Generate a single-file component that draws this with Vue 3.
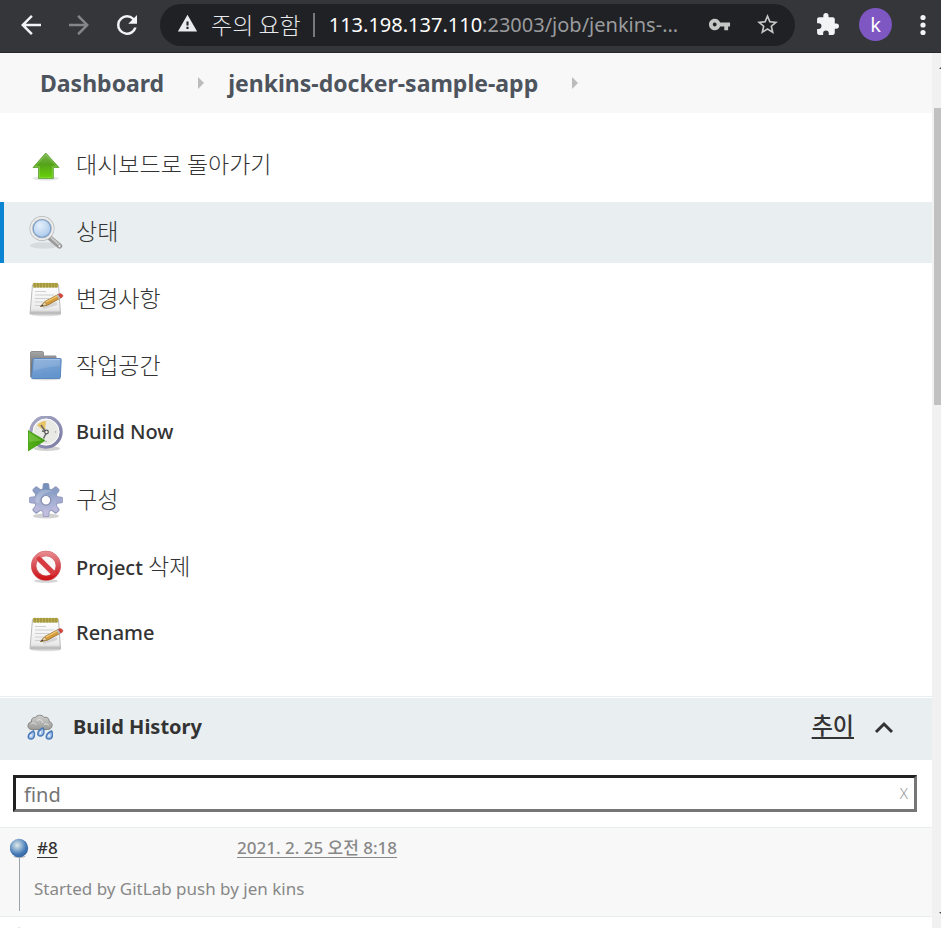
<script setup>
/**
 * Jenkins job page in a narrow browser window:
 * toolbar, breadcrumbs, task list and build history.
 */
import { ref } from 'vue'

// Korean runs are set lighter and larger than latin ones
const tasks = [
  { icon: 'up', parts: [{ text: '대시보드로 돌아가기', ko: true }] },
  { icon: 'search', parts: [{ text: '상태', ko: true }], active: true },
  { icon: 'notepad', parts: [{ text: '변경사항', ko: true }] },
  { icon: 'folder', parts: [{ text: '작업공간', ko: true }] },
  { icon: 'clock', parts: [{ text: 'Build Now' }] },
  { icon: 'gear', parts: [{ text: '구성', ko: true }] },
  { icon: 'stop', parts: [{ text: 'Project ' }, { text: '삭제', ko: true }] },
  { icon: 'notepad', parts: [{ text: 'Rename' }] },
]

const crumbs = ['Dashboard', 'jenkins-docker-sample-app']

const builds = [
  { id: 8, date: '2021. 2. 25 오전 8:18', cause: 'Started by GitLab push by jen kins' },
]

const query = ref('')

// Eight teeth, one every 45 degrees
const teeth = [0, 45, 90, 135, 180, 225, 270, 315]
</script>

<template>
  <div class="window">
    <header class="toolbar">
      <button class="tool" aria-label="Back">
        <svg width="30" height="30" viewBox="0 0 24 24"><path d="M20 11H7.83l5.59-5.59L12 4l-8 8 8 8 1.41-1.41L7.83 13H20v-2z" /></svg>
      </button>
      <button class="tool off" aria-label="Forward">
        <svg width="30" height="30" viewBox="0 0 24 24"><path d="M4 11h12.17l-5.59-5.59L12 4l8 8-8 8-1.41-1.41L16.17 13H4v-2z" /></svg>
      </button>
      <button class="tool" aria-label="Reload">
        <svg width="30" height="30" viewBox="0 0 24 24"><path d="M17.65 6.35A7.96 7.96 0 0 0 12 4a8 8 0 1 0 7.73 10h-2.08A6 6 0 1 1 12 6c1.66 0 3.14.69 4.22 1.78L13 11h7V4l-2.35 2.35z" /></svg>
      </button>

      <div class="omnibox">
        <button class="site-info">
          <svg width="21" height="21" viewBox="0 0 24 24"><path d="M1 21h22L12 2 1 21zm12.2-2.8h-2.4v-2.4h2.4v2.4zm0-4h-2.4V9.6h2.4v4.6z" /></svg>
          <span>주의 요함</span>
        </button>
        <span class="divider"></span>
        <div class="url"><b>113.198.137.110</b>:23003/job/jenkins-...</div>
        <button class="tool dim" aria-label="Passwords">
          <svg width="23" height="23" viewBox="0 0 24 24"><path d="M12.65 10C11.83 7.67 9.61 6 7 6c-3.31 0-6 2.69-6 6s2.69 6 6 6c2.61 0 4.83-1.67 5.65-4H17v4h4v-4h2v-4H12.65zM7 14c-1.1 0-2-.9-2-2s.9-2 2-2 2 .9 2 2-.9 2-2 2z" /></svg>
        </button>
        <button class="tool dim" aria-label="Bookmark">
          <svg width="25" height="25" viewBox="0 0 24 24"><path d="M22 9.24l-7.19-.62L12 2 9.19 8.63 2 9.24l5.46 4.73L5.82 21 12 17.27 18.18 21l-1.63-7.03L22 9.24zM12 15.4l-3.76 2.27 1-4.28-3.32-2.88 4.38-.38L12 6.1l1.71 4.04 4.38.38-3.32 2.88 1 4.28L12 15.4z" /></svg>
        </button>
      </div>

      <div class="actions">
        <button class="tool" aria-label="Extensions">
          <svg width="25" height="25" viewBox="0 0 24 24"><path d="M20.5 11H19V7c0-1.1-.9-2-2-2h-4V3.5a2.5 2.5 0 0 0-5 0V5H4c-1.1 0-2 .9-2 2v3.8h1.5a2.7 2.7 0 0 1 0 5.4H2V20c0 1.1.9 2 2 2h3.8v-1.5a2.7 2.7 0 0 1 5.4 0V22H17c1.1 0 2-.9 2-2v-4h1.5a2.5 2.5 0 0 0 0-5z" /></svg>
        </button>
        <button class="avatar">k</button>
        <button class="tool" aria-label="Menu">
          <svg width="24" height="24" viewBox="0 0 24 24">
            <circle cx="12" cy="4.5" r="2.6" />
            <circle cx="12" cy="12" r="2.6" />
            <circle cx="12" cy="19.5" r="2.6" />
          </svg>
        </button>
      </div>
    </header>

    <div class="viewport">
      <main class="page">
        <nav class="crumbs">
          <template v-for="c in crumbs" :key="c">
            <a href="#">{{ c }}</a>
            <svg width="6" height="12" viewBox="0 0 6 12"><path d="M0 0l6 6-6 6z" fill="#bcbcbc" /></svg>
          </template>
        </nav>

        <nav class="tasks">
          <a v-for="(t, i) in tasks" :key="i" href="#" class="task" :class="{ active: t.active }">
            <!-- green arrow -->
            <svg v-if="t.icon === 'up'" class="icon" viewBox="0 0 36 36">
              <defs>
                <linearGradient id="up-fill" x1="0" y1="0" x2="0" y2="1">
                  <stop offset="0" stop-color="#7fb557" />
                  <stop offset=".45" stop-color="#55a31a" />
                  <stop offset="1" stop-color="#68d406" />
                </linearGradient>
              </defs>
              <ellipse cx="18" cy="30.500" rx="13" ry="2.200" fill="#000" opacity=".1" />
              <path d="M17.800 5L31 19.500h-5.700v11h-14.800v-11H5z" fill="url(#up-fill)" stroke="#6cab45" stroke-width="1" stroke-linejoin="round" />
              <path d="M17.800 6.600L28.600 18.500h-4.300v11h-12.800v-11H7.300z" fill="none" stroke="#a6e070" stroke-width=".8" opacity=".5" />
            </svg>

            <!-- magnifier -->
            <svg v-else-if="t.icon === 'search'" class="icon" viewBox="0 0 36 36">
              <defs>
                <radialGradient id="lens" cx=".4" cy=".35" r=".75">
                  <stop offset="0" stop-color="#e4effb" />
                  <stop offset=".6" stop-color="#b9d3ef" />
                  <stop offset="1" stop-color="#8db1dc" />
                </radialGradient>
              </defs>
              <ellipse cx="16" cy="30.500" rx="14" ry="3.200" fill="#000" opacity=".08" />
              <path d="M22 23l9.500 8" stroke="#999" stroke-width="5.400" stroke-linecap="round" />
              <path d="M23.500 23l8 7" stroke="#c8c8c8" stroke-width="2" stroke-linecap="round" />
              <circle cx="31.500" cy="31" r="1.500" fill="#f2f2f2" stroke="#888" stroke-width=".6" />
              <circle cx="14" cy="13.500" r="10.800" fill="url(#lens)" stroke="#b5b5b5" stroke-width="3.400" />
              <circle cx="14" cy="13.500" r="10.800" fill="none" stroke="#ececec" stroke-width="2" />
              <circle cx="14" cy="13.500" r="8.800" fill="none" stroke="#7c9fca" stroke-width="1.100" />
            </svg>

            <!-- notepad and pencil -->
            <svg v-else-if="t.icon === 'notepad'" class="icon" viewBox="0 0 36 36">
              <defs>
                <linearGradient id="sheet" x1="0" y1="0" x2="0" y2="1">
                  <stop offset="0" stop-color="#fff" />
                  <stop offset=".8" stop-color="#ececec" />
                  <stop offset="1" stop-color="#d0d0d0" />
                </linearGradient>
              </defs>
              <ellipse cx="18" cy="32.500" rx="15" ry="1.800" fill="#000" opacity=".13" />
              <path d="M4.500 2.500h26l2 29.500h-30.500z" fill="url(#sheet)" stroke="#bbb" stroke-width="1" stroke-linejoin="round" />
              <path d="M2.500 29.500h30l.2 2.500h-30.700z" fill="#bdbdbd" />
              <rect x="5" y="1" width="25" height="4.500" fill="#b8ac4c" />
              <path d="M7 .8v5M10 .8v5M13 .8v5M16 .8v5M19 .8v5M22 .8v5M25 .8v5M28 .8v5" stroke="#938739" stroke-width="1" />
              <path d="M7 9.500h11M7 13h19M7 16.500h14M7 20h8M7 23.500h7" stroke="#cdcfd1" stroke-width="1.100" />
              <path d="M15 25.500l14-4" stroke="#000" stroke-width="3" opacity=".1" />
              <path d="M12.500 24.500l4.500-5 13-7 2.500 3.600-13 7z" fill="#d69b3a" stroke="#99702d" stroke-width=".9" stroke-linejoin="round" />
              <path d="M17.500 20.200l13-7" stroke="#f3cd7d" stroke-width="1.200" />
              <path d="M12.500 24.500l4.200-4.700 2.300 3.200z" fill="#e7cfa2" stroke="#8c6d3b" stroke-width=".6" />
              <path d="M12.500 24.500l2-2 .9 1.200z" fill="#333" />
              <path d="M28.500 13.300l2-1.100 2.400 3.600-2 1.100z" fill="#b9bfc6" />
              <path d="M30.500 12.200c2.500-1.600 5.800 1.200 3.600 3l-1.500.8z" fill="#d9453c" stroke="#ac3831" stroke-width=".6" />
            </svg>

            <!-- folder -->
            <svg v-else-if="t.icon === 'folder'" class="icon" viewBox="0 0 36 36">
              <defs>
                <linearGradient id="folder-front" x1="0" y1="0" x2=".3" y2="1">
                  <stop offset="0" stop-color="#86acd9" />
                  <stop offset="1" stop-color="#6394cc" />
                </linearGradient>
                <linearGradient id="folder-back" x1="0" y1="0" x2="0" y2="1">
                  <stop offset="0" stop-color="#a6a6a6" />
                  <stop offset=".5" stop-color="#777" />
                </linearGradient>
              </defs>
              <ellipse cx="18" cy="30" rx="15" ry="1.500" fill="#000" opacity=".13" />
              <path d="M2.500 28V4Q2.500 2.500 4 2.500h10.200q1.300 0 1.300 1.500V7h12.500v21z" fill="url(#folder-back)" stroke="#909090" stroke-width="1" stroke-linejoin="round" />
              <path d="M6.300 9.500h26q1 0 .9 1L32.300 28.500q0 1-1 1H4.500q-1 0-.9-1l1.500-18q.2-1 1.200-1z" fill="url(#folder-front)" stroke="#5987be" stroke-width="1" />
              <path d="M6.500 10.500h25.700" stroke="#a3c1e4" stroke-width="1" />
              <path d="M6 11l26-.2-.4 6.200Q19 17.500 5.400 22z" fill="#fff" opacity=".12" />
            </svg>

            <!-- clock with play -->
            <svg v-else-if="t.icon === 'clock'" class="icon" viewBox="0 0 36 36">
              <defs>
                <linearGradient id="rim" x1="0" y1="0" x2="1" y2="1">
                  <stop offset="0" stop-color="#a9aac6" />
                  <stop offset="1" stop-color="#7a7ba3" />
                </linearGradient>
                <linearGradient id="play" x1="0" y1="0" x2="1" y2="0">
                  <stop offset="0" stop-color="#56b01c" />
                  <stop offset="1" stop-color="#3c9908" />
                </linearGradient>
              </defs>
              <ellipse cx="19" cy="32.500" rx="13" ry="2.500" fill="#000" opacity=".18" />
              <circle cx="18" cy="16" r="15" fill="#e9eae6" stroke="url(#rim)" stroke-width="3.400" />
              <circle cx="18" cy="16" r="13" fill="none" stroke="#fff" stroke-width="1" />
              <path d="M17 15L9 9.500A11.500 11.500 0 0 1 18 5z" fill="#e8c465" />
              <path d="M17 15L13 9M19 16l-5-1M18.500 16.500l-3 6" stroke="#666" stroke-width="1.500" />
              <circle cx="18.500" cy="16" r="1.800" fill="#efefef" stroke="#555" stroke-width="1.200" />
              <circle cx="27.500" cy="16" r=".8" fill="#aaa" />
              <circle cx="18" cy="25.500" r=".8" fill="#aaa" />
              <path d="M0 14.500L17 24.500 0 35z" fill="url(#play)" stroke="#479e1c" stroke-width=".8" />
              <path d="M1 16.500L14 24.500 1 26z" fill="#8bd256" opacity=".5" />
            </svg>

            <!-- gear -->
            <svg v-else-if="t.icon === 'gear'" class="icon" viewBox="0 0 36 36">
              <defs>
                <linearGradient id="gear-fill" gradientUnits="userSpaceOnUse" x1="0" y1="0" x2="0" y2="36">
                  <stop offset="0" stop-color="#6f8eb9" />
                  <stop offset=".5" stop-color="#a5b0d3" />
                  <stop offset="1" stop-color="#c3bfde" />
                </linearGradient>
              </defs>
              <ellipse cx="18" cy="33" rx="13" ry="2.500" fill="#000" opacity=".18" />
              <g fill="#8f98b9">
                <path v-for="a in teeth" :key="a" d="M14 8l.8-6.500Q15 0 16.500 0h3Q21 0 21.200 1.500L22 8z" :transform="`rotate(${a} 18 17)`" />
                <circle cx="18" cy="17" r="12" />
              </g>
              <circle cx="18" cy="17" r="11.300" fill="url(#gear-fill)" />
              <path d="M15 7l.7-6.300h4.600l.7 6.300z" fill="#7591bb" />
              <path d="M15 27l.7 6.300h4.600l.7-6.300z" fill="#c1bddd" />
              <path d="M8 14l-6.800.7v4.600l6.800.7zM28 14l6.800.7v4.600l-6.800.7z" fill="#a2abcf" />
              <path d="M8.500 12L5.300 7.200 8 4.500l5 3.300zM27.500 12l3.200-4.800L28 4.500l-5 3.300z" fill="#8b9fc6" />
              <path d="M8.500 22l-3.200 4.800L8 29.500l5-3.300zM27.500 22l3.200 4.800L28 29.500l-5-3.300z" fill="#bab9db" />
              <path d="M7.500 18.500A11 11 0 0 1 18 6.500a11 11 0 0 1 6 2q-12 1-13 12z" fill="#fff" opacity=".2" />
              <circle cx="18" cy="17.300" r="4.800" fill="#fff" stroke="#858dae" stroke-width="1.200" />
            </svg>

            <!-- no entry -->
            <svg v-else class="icon" viewBox="0 0 36 36">
              <defs>
                <linearGradient id="stop-ring" gradientUnits="userSpaceOnUse" x1="0" y1="2" x2="0" y2="31">
                  <stop offset="0" stop-color="#e88a8e" />
                  <stop offset=".5" stop-color="#d84a50" />
                  <stop offset="1" stop-color="#cc0a0d" />
                </linearGradient>
              </defs>
              <ellipse cx="18" cy="31" rx="12" ry="1.800" fill="#000" opacity=".17" />
              <circle cx="18" cy="15.800" r="12.300" fill="#fbf6f6" stroke="#cf6a70" stroke-width="5.400" />
              <path d="M9.500 7.300l17 17" stroke="#cf5358" stroke-width="5.200" />
              <circle cx="18" cy="15.800" r="12.300" fill="none" stroke="url(#stop-ring)" stroke-width="4.300" />
              <path d="M9.500 7.300l17 17" stroke="#d83a40" stroke-width="4" />
            </svg>

            <span class="label"><span v-for="p in t.parts" :key="p.text" :class="{ ko: p.ko }">{{ p.text }}</span></span>
          </a>
        </nav>

        <section class="history">
          <div class="history-head">
            <svg width="26" height="26" viewBox="0 0 26 26">
              <defs>
                <linearGradient id="cloud" x1="0" y1="0" x2="0" y2="1">
                  <stop offset="0" stop-color="#d0d0ce" />
                  <stop offset="1" stop-color="#9a9a97" />
                </linearGradient>
              </defs>
              <path d="M5 15.500C1.500 15.500.8 13 1 11.500 1.200 9.500 2.500 8 4.500 8 4 5 6 3 8.500 3.500 9.500.800 15.500.300 17 3.500c3-1 5.500 1 5 4 2.500.5 3.500 2.500 3 4.500-.4 2.500-2.500 3.500-4.500 3.500z" fill="url(#cloud)" stroke="#858582" stroke-width="1" />
              <path d="M4.500 9.500c2-1.500 4 0 4.500 1.500M10 6.500c3-2 5.500 0 6 2.500M17 10.500c2-1.500 4-.5 4.500 1" fill="none" stroke="#e6e6e4" stroke-width="1" />
              <g fill="#a9c5ea" stroke="#4a79b9" stroke-width="1.500">
                <path d="M6.500 17c2 3 1 8-2.500 8-4 0-4-5 2.500-8z" />
                <path d="M16 14c2 3 1 8-2.500 8-4 0-4-5 2.500-8z" />
                <path d="M24.500 17c2 3 1 8-2.500 8-4 0-4-5 2.500-8z" />
              </g>
              <path d="M4 20.500v2M13.500 17.500v2M22 20.500v2" stroke="#fff" stroke-width="1.300" />
            </svg>
            <h2>Build History</h2>
            <a href="#" class="trend">추이</a>
            <button class="collapse" aria-label="Collapse">
              <svg width="20" height="14" viewBox="0 0 20 14"><path d="M2 12l8-8 8 8" fill="none" stroke="#333" stroke-width="3" /></svg>
            </button>
          </div>

          <div class="find">
            <input v-model="query" type="text" placeholder="find" aria-label="find" />
            <button class="clear" @click="query = ''">X</button>
          </div>

          <svg width="0" height="0" class="defs">
            <defs>
              <radialGradient id="ball" cx=".4" cy=".35" r=".7">
                <stop offset="0" stop-color="#dfe9e6" />
                <stop offset=".3" stop-color="#9dbcd6" />
                <stop offset=".7" stop-color="#4478b6" />
                <stop offset="1" stop-color="#3562a0" />
              </radialGradient>
            </defs>
          </svg>

          <article v-for="b in builds" :key="b.id" class="build shaded">
            <div class="build-head">
              <svg width="20" height="20" viewBox="0 0 20 20">
                <ellipse cx="9.500" cy="18.500" rx="6" ry="1.500" fill="#000" opacity=".25" />
                <circle cx="9" cy="10" r="9.200" fill="url(#ball)" />
              </svg>
              <a href="#" class="number">#{{ b.id }}</a>
              <a href="#" class="date">{{ b.date }}</a>
            </div>
            <p>{{ b.cause }}</p>
          </article>

          <!-- next build, scrolled below the fold -->
          <article class="build">
            <div class="build-head">
              <svg width="20" height="20" viewBox="0 0 20 20"><circle cx="9" cy="10" r="9.200" fill="url(#ball)" /></svg>
            </div>
          </article>
        </section>
      </main>

      <div class="scrollbar">
        <svg width="7" height="5" viewBox="0 0 7 5"><path d="M5 3l2-2v2z" fill="#505050" /></svg>
        <span class="thumb"></span>
        <svg width="7" height="5" viewBox="0 0 7 5"><path d="M5 2l2 2V2z" fill="#505050" /></svg>
      </div>
    </div>
  </div>
</template>

<style>
body {
  margin: 0;
}
</style>

<style scoped>
.window {
  display: flex;
  flex-direction: column;
  height: 100vh;
  overflow: hidden;
  background: #fff;
  color: #333;
  font-family: 'Noto Sans', 'Noto Sans CJK KR', sans-serif;
  font-size: 20px;
}
button {
  padding: 0;
  border: 0;
  background: none;
  color: inherit;
  font: inherit;
  cursor: pointer;
}
svg {
  display: block;
  flex: none;
}
a {
  color: inherit;
  text-decoration: none;
}

/* Browser toolbar */
.toolbar {
  display: flex;
  flex: none;
  align-items: center;
  gap: 18px;
  box-sizing: border-box;
  height: 53px;
  padding: 0 6px 3px 16px;
  border-bottom: 1px solid #28282a;
  background: #35363a;
}
.tool {
  fill: #f1f3f4;
}
.tool.off {
  fill: #85868a;
}
.tool.dim {
  fill: #c6c6c6;
}
.omnibox {
  display: flex;
  flex: 1;
  align-items: center;
  min-width: 0;
  height: 42px;
  padding: 0 15px 0 17px;
  border-radius: 21px;
  background: #202124;
}
.site-info {
  display: flex;
  align-items: center;
  gap: 13px;
  padding-bottom: 2px;
  color: #e8eaed;
  fill: #e8eaed;
  font-family: 'Noto Sans CJK KR', sans-serif;
  font-size: 23px;
  font-weight: 300;
  line-height: 32px;
  white-space: nowrap;
}
.divider {
  flex: none;
  width: 2px;
  height: 24px;
  margin: 0 14px 0 12px;
  background: #77787b;
}
.url {
  flex: 1;
  overflow: hidden;
  color: #9a9b9e;
  line-height: 32px;
  white-space: nowrap;
}
.url b {
  color: #fff;
  font-weight: 400;
}
.omnibox .tool {
  margin-left: 24px;
}
.actions {
  display: flex;
  align-items: center;
  gap: 19px;
  margin-left: 2px;
}
.avatar {
  width: 33px;
  height: 33px;
  border-radius: 50%;
  background: #7e57c2;
  color: #fff;
  font-size: 20px;
  line-height: 32px;
}

/* Page */
.viewport {
  display: flex;
  flex: 1;
  min-height: 0;
}
.page {
  flex: 1;
  min-width: 0;
  overflow: hidden;
}
.scrollbar {
  display: flex;
  flex: none;
  flex-direction: column;
  align-items: flex-end;
  justify-content: space-between;
  box-sizing: border-box;
  width: 9px;
  padding: 13px 0;
  background: #f1f1f1;
}
.thumb {
  width: 7px;
  height: 35%;
  margin: 37px 0 auto;
  background: #c1c1c1;
}

.crumbs {
  display: flex;
  align-items: center;
  height: 60px;
  padding: 0 40px;
  background: #f8f8f8;
  color: #4d545d;
  font-size: 23px;
  font-weight: 700;
}
.crumbs svg {
  margin: 0 24px 0 34px;
}

.tasks {
  display: flex;
  flex-direction: column;
  gap: 6px;
  padding: 22px 0 31px;
}
.task {
  display: flex;
  align-items: center;
  gap: 12px;
  height: 61px;
  padding-left: 24px;
  border-left: 4px solid transparent;
}
.task.active {
  border-left-color: #0b84d3;
  background: #e9eef1;
}
.icon {
  width: 36px;
  height: 36px;
}
.label {
  padding-bottom: 3px;
  font-weight: 500;
  line-height: 32px;
  white-space: pre;
}
.ko {
  font-family: 'Noto Sans CJK KR', sans-serif;
  font-size: 23px;
  font-weight: 300;
}

/* Build history */
.history {
  border-top: 1px solid #e9eef1;
}
.history-head {
  display: flex;
  align-items: center;
  box-sizing: border-box;
  height: 62px;
  margin-top: 1px;
  padding: 0 38px 4px 27px;
  background: #e9eef1;
}
.history-head h2 {
  margin: 0 auto 0 20px;
  font-size: 20px;
  font-weight: 700;
  line-height: 32px;
}
.trend {
  padding-bottom: 6px;
  font-family: 'Noto Sans CJK KR', sans-serif;
  font-size: 23px;
  font-weight: 500;
  line-height: 32px;
  text-decoration: underline;
  text-underline-offset: 3px;
}
.collapse {
  margin-left: 20px;
}
.find {
  position: relative;
  margin: 15px 15px 15px 13px;
}
.find input {
  display: block;
  box-sizing: border-box;
  width: 100%;
  height: 37px;
  padding: 1px 32px 0 8px;
  border: 3px solid;
  border-color: #212121 #767676 #767676 #212121;
  border-radius: 0;
  background: #fff;
  color: #333;
  font: inherit;
}
.find input::placeholder {
  color: #757575;
  opacity: 1;
}
.clear {
  position: absolute;
  top: 0;
  right: 9px;
  color: #999;
  font-size: 15px;
  font-weight: 300;
  line-height: 36px;
}
.defs {
  position: absolute;
}

.build {
  border-top: 1px solid #e9eef1;
  padding: 10px 0 5px;
}
.shaded {
  background: #f8f8f8;
}
.build-head {
  display: grid;
  grid-template-columns: 20px 193px 1fr;
  column-gap: 7px;
  align-items: center;
  height: 20px;
  padding-left: 10px;
  font-size: 17px;
}
.build-head a {
  justify-self: start;
  line-height: 20px;
  text-decoration: underline;
  text-underline-offset: 3px;
}
.number {
  font-weight: 500;
}
.date {
  color: #888;
  font-weight: 500;
}
.build p {
  margin: 0 0 0 19px;
  padding: 19px 0 10px 14px;
  border-left: 1px solid #9aa3ad;
  color: #888;
  font-size: 17px;
  line-height: 24px;
}
</style>
